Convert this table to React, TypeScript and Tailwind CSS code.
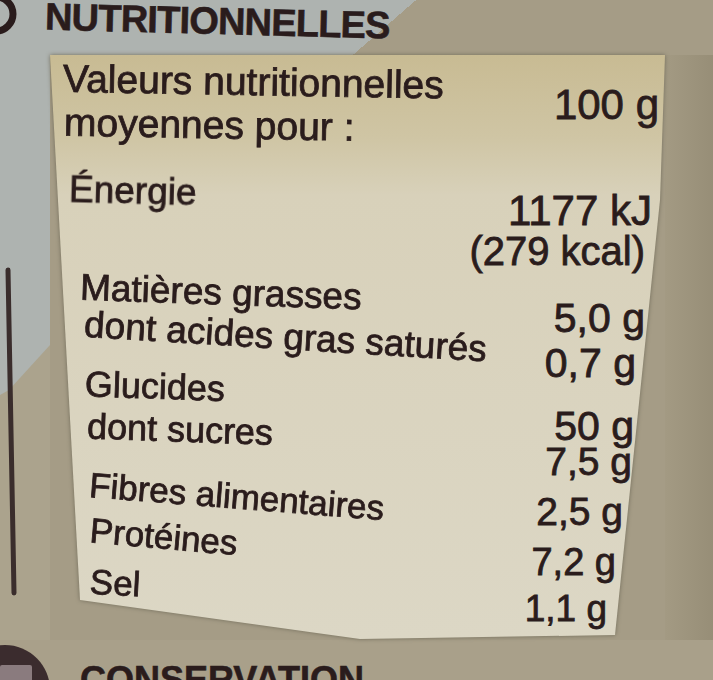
const labels = [
  { text: 'Valeurs nutritionnelles', cls: 'mt-[7px] pl-[13px] text-[39px] rotate-[1deg]' },
  { text: 'moyennes pour :', cls: 'mt-[4px] pl-[14px] text-[39px] rotate-[1deg]' },
  { text: 'Énergie', cls: 'mt-[28px] pl-[19px] text-[37px] rotate-[1.5deg]' },
  { text: 'Matières grasses', cls: 'mt-[64px] pl-[30px] text-[37px] rotate-[2deg]' },
  { text: 'dont acides gras saturés', cls: 'mt-[7px] pl-[34px] text-[37px] rotate-[3.5deg]' },
  { text: 'Glucides', cls: 'mt-[14px] pl-[35px] text-[36px] rotate-[2deg]' },
  { text: 'dont sucres', cls: 'mt-[7px] pl-[37px] text-[36px] rotate-[2deg]' },
  { text: 'Fibres alimentaires', cls: 'mt-[30px] pl-[39px] text-[35px] rotate-[4.5deg]' },
  { text: 'Protéines', cls: 'mt-[5px] pl-[40px] text-[35px] rotate-[5deg]' },
  { text: 'Sel', cls: 'mt-[12px] pl-[40px] text-[35px] rotate-[3deg]' },
]

const values = [
  { text: '100 g', cls: 'mt-[32px] pr-[6px] text-[42px]' },
  { text: '1177 kJ', cls: 'mt-[70px] pr-[13px] text-[42px]' },
  { text: '(279 kcal)', cls: 'mt-[4px] pr-[20px] text-[40px]' },
  { text: '5,0 g', cls: 'mt-[31px] pr-[20px] text-[41px]' },
  { text: '0,7 g', cls: 'mt-[9px] pr-[29px] text-[41px]' },
  { text: '50 g', cls: 'mt-[27px] pr-[31px] text-[41px]' },
  { text: '7,5 g', cls: 'mt-0 pr-[33px] text-[39px]' },
  { text: '2,5 g', cls: 'mt-[14px] pr-[42px] text-[39px]' },
  { text: '7,2 g', cls: 'mt-[14px] pr-[49px] text-[38px]' },
  { text: '1,1 g', cls: 'mt-[11px] pr-[58px] text-[37px]' },
]

export default function App() {
  return (
    <div className="w-[713px] h-[680px] overflow-hidden flex flex-col bg-[#a59c86] font-['Liberation_Sans',Arial,sans-serif] text-[#2a1c1c]">
      {/* Header band, grey-blue wedge on the left */}
      <div className="h-[55px] shrink-0 flex items-start bg-[linear-gradient(139deg,#aeb3b0_273px,#a59c86_273px)]">
        <svg width="22" height="48" viewBox="0 0 22 48" className="shrink-0">
          <circle cx="-4" cy="14" r="17" fill="none" stroke="#2a1c1c" strokeWidth="7" />
        </svg>
        <span className="ml-[23px] mt-[2px] text-[38px] leading-none font-bold tracking-[-0.8px] rotate-[1.5deg] [-webkit-text-stroke:0.6px_#2a1c1c]">
          NUTRITIONNELLES
        </span>
      </div>

      {/* Body */}
      <div className="h-[585px] shrink-0 flex">
        <svg width="50" height="585" viewBox="0 0 50 585" className="shrink-0">
          <rect x="0" y="0" width="50" height="585" fill="#aba38d" />
          <polygon points="0,0 50,0 50,290 9,335 0,340" fill="#aeb3b0" />
          <line x1="8" y1="215" x2="14" y2="538" stroke="#3a2d2c" strokeWidth="5" strokeLinecap="round" />
        </svg>

        <div className="w-[615px] h-[585px] shrink-0 [filter:drop-shadow(0_0_2px_#6f6a58)]">
          <div className="w-full h-full grid bg-[linear-gradient(180deg,#c8bb93_0%,#cfc5a4_14%,#d8d1ba_24%,#dcd7c5_100%)] [clip-path:polygon(0_0,615px_0,610px_145px,565px_580px,310px_584px,30px_545px)]">
            <div className="col-start-1 row-start-1 flex flex-col items-start">
              {labels.map((l) => (
                <div key={l.text} className={`${l.cls} leading-none whitespace-nowrap [-webkit-text-stroke:0.8px_#2a1c1c]`}>
                  {l.text}
                </div>
              ))}
            </div>
            <div className="col-start-1 row-start-1 flex flex-col items-end">
              {values.map((v) => (
                <div key={v.text} className={`${v.cls} leading-[36px] whitespace-nowrap [-webkit-text-stroke:0.8px_#2a1c1c]`}>
                  {v.text}
                </div>
              ))}
            </div>
          </div>
        </div>

        <div className="flex-1 bg-[linear-gradient(90deg,#a39a83_0%,#978e77_100%)]" />
      </div>

      {/* Footer */}
      <div className="flex-1 flex items-start bg-[#a9a08a]">
        <svg width="60" height="40" viewBox="0 0 60 40" className="shrink-0">
          <circle cx="5" cy="50" r="45" fill="#3b2c2e" />
          <rect x="0" y="25" width="32" height="20" rx="2" fill="#8a7b7e" />
        </svg>
        <span className="ml-[20px] mt-[22px] text-[36px] leading-none font-bold [-webkit-text-stroke:0.6px_#2a1c1c]">CONSERVATION</span>
      </div>
    </div>
  )
}
